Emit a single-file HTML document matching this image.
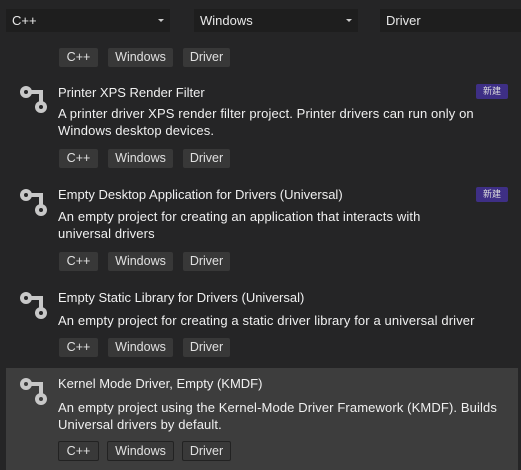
<!DOCTYPE html>
<html><head><style>
body{margin:0;width:521px;height:470px;background:#252526;font-family:"Liberation Sans","Noto Sans CJK SC",sans-serif;color:#e8e8e8;position:relative;overflow:hidden;font-size:13px}
.dd{position:absolute;top:9px;height:23px;background:#1e1e1e;line-height:23px;padding-left:6px;font-size:13px}
.dd .a{position:absolute;right:6px;top:10px;width:0;height:0;border-left:3px solid transparent;border-right:3px solid transparent;border-top:3px solid #ccc}
.tag{position:absolute;height:19px;line-height:19px;background:#383838;border-radius:2px;text-align:center;font-size:12.5px;color:#e0e0e0;box-sizing:border-box}
.t{position:absolute;left:58px;font-size:13px;color:#f0f0f0;white-space:nowrap}
.d{position:absolute;left:58px;font-size:13px;line-height:17px;color:#f0f0f0;white-space:nowrap;letter-spacing:0.12px}
.badge{position:absolute;left:476px;width:32px;height:15px;background:#3e2f85;border-radius:2px;font-size:9px;line-height:15px;text-align:center;color:#ddd}
svg{position:absolute}
.sel{position:absolute;left:6px;top:368px;width:512px;height:102px;background:#3d3d3d}
.sel-tag{background:#393939;border:1px solid #222}
</style></head><body>
<div class="dd" style="left:6px;width:158px">C++<div class="a"></div></div>
<div class="dd" style="left:194px;width:158px">Windows<div class="a"></div></div>
<div class="dd" style="left:380px;width:141px">Driver</div>

<div class="tag" style="left:59px;top:48px;width:39px">C++</div>
<div class="tag" style="left:108px;top:48px;width:65px">Windows</div>
<div class="tag" style="left:183px;top:48px;width:47px">Driver</div>

<svg style="left:0;top:0" width="60" height="470">
<g fill="none" stroke="#c8c8c8" stroke-width="4">
<path d="M26 92H41V106"/><path d="M26 195H41V209"/><path d="M26 298H41V312"/>
</g>
<g fill="#c8c8c8">
<circle cx="26" cy="92" r="6"/><circle cx="41" cy="107" r="6"/>
<circle cx="26" cy="195" r="6"/><circle cx="41" cy="210" r="6"/>
<circle cx="26" cy="298" r="6"/><circle cx="41" cy="313" r="6"/>
</g>
<g fill="#252526">
<circle cx="26" cy="92" r="2"/><circle cx="41" cy="107" r="2"/>
<circle cx="26" cy="195" r="2"/><circle cx="41" cy="210" r="2"/>
<circle cx="26" cy="298" r="2"/><circle cx="41" cy="313" r="2"/>
</g>
</svg>
<div class="t" style="top:85px">Printer XPS Render Filter</div>
<div class="badge" style="top:84px">新建</div>
<div class="d" style="top:105px">A printer driver XPS render filter project. Printer drivers can run only on<br>Windows desktop devices.</div>
<div class="tag" style="left:59px;top:149px;width:39px">C++</div>
<div class="tag" style="left:108px;top:149px;width:65px">Windows</div>
<div class="tag" style="left:183px;top:149px;width:47px">Driver</div>

<div class="t" style="top:187px">Empty Desktop Application for Drivers (Universal)</div>
<div class="badge" style="top:187px">新建</div>
<div class="d" style="top:208px">An empty project for creating an application that interacts with<br>universal drivers</div>
<div class="tag" style="left:59px;top:252px;width:39px">C++</div>
<div class="tag" style="left:108px;top:252px;width:65px">Windows</div>
<div class="tag" style="left:183px;top:252px;width:47px">Driver</div>

<div class="t" style="top:290px">Empty Static Library for Drivers (Universal)</div>
<div class="d" style="top:312px">An empty project for creating a static driver library for a universal driver</div>
<div class="tag" style="left:59px;top:338px;width:39px">C++</div>
<div class="tag" style="left:108px;top:338px;width:65px">Windows</div>
<div class="tag" style="left:183px;top:338px;width:47px">Driver</div>

<div class="sel"></div>
<svg style="left:0;top:0" width="60" height="470">
<path d="M26 384H41V398" fill="none" stroke="#c8c8c8" stroke-width="4"/>
<circle cx="26" cy="384" r="6" fill="#c8c8c8"/><circle cx="41" cy="399" r="6" fill="#c8c8c8"/>
<circle cx="26" cy="384" r="2" fill="#3d3d3d"/><circle cx="41" cy="399" r="2" fill="#3d3d3d"/>
</svg>
<div class="t" style="top:376px">Kernel Mode Driver, Empty (KMDF)</div>
<div class="d" style="top:399px">An empty project using the Kernel-Mode Driver Framework (KMDF). Builds<br>Universal drivers by default.</div>
<div class="tag sel-tag" style="left:58px;top:441px;width:41px;height:20px">C++</div>
<div class="tag sel-tag" style="left:107px;top:441px;width:67px;height:20px">Windows</div>
<div class="tag sel-tag" style="left:182px;top:441px;width:49px;height:20px">Driver</div>
</body></html>
